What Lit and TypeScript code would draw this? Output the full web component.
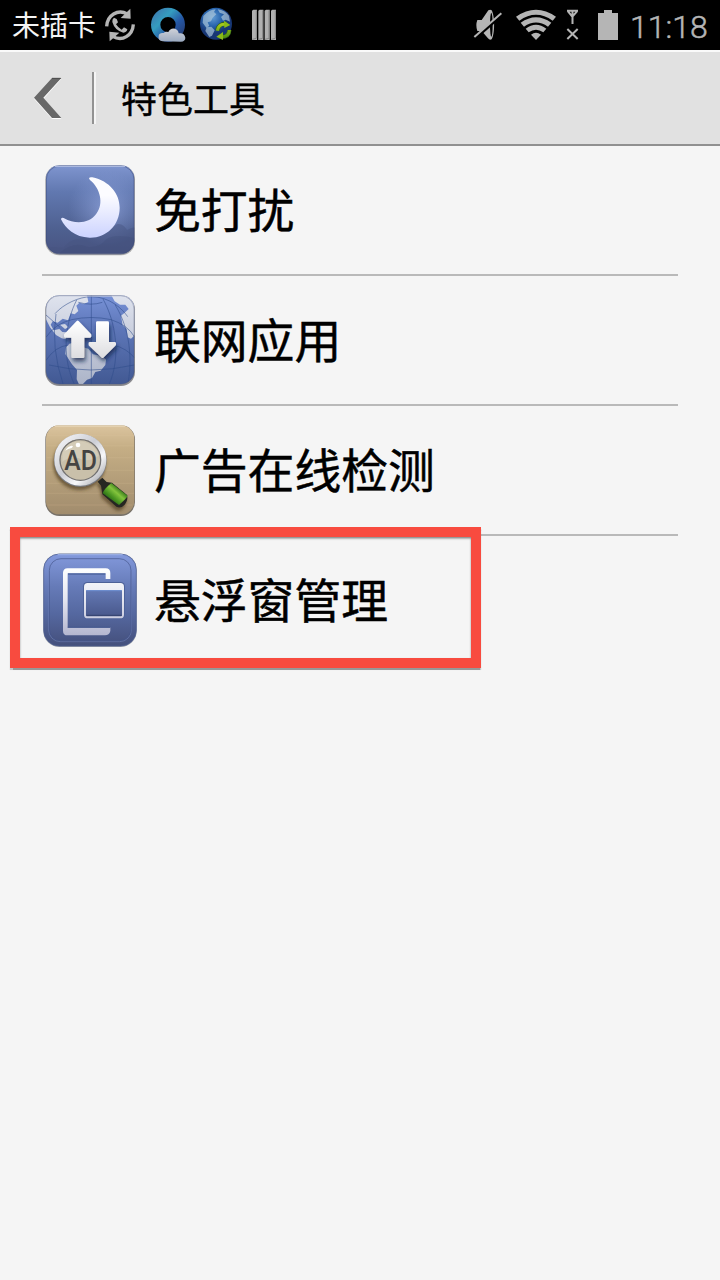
import { LitElement, html, css, svg } from "lit";
import { customElement, property } from "lit/decorators.js";

const moon = svg`
  <defs>
    <linearGradient id="sky" x1="0" y1="0" x2="0" y2="1"><stop offset="0" stop-color="#7f95cf"/><stop offset=".3" stop-color="#6178b0"/><stop offset=".72" stop-color="#4e6090"/><stop offset="1" stop-color="#495482"/></linearGradient>
    <radialGradient id="halo" cx="215" cy="160" r="115" gradientUnits="userSpaceOnUse"><stop offset="0" stop-color="#a9bcf5" stop-opacity=".55"/><stop offset="1" stop-color="#8fa4e0" stop-opacity="0"/></radialGradient>
    <linearGradient id="lune" x1="0" y1="0" x2="0" y2="1"><stop offset=".3" stop-color="#fcfcff"/><stop offset="1" stop-color="#ccd3ff"/></linearGradient>
    <clipPath id="tile"><rect x="33" y="31" width="265" height="265" rx="40"/></clipPath>
  </defs>
  <rect x="31" y="31" width="269" height="270" rx="42" fill="#aaa"/>
  <g clip-path="url(#tile)">
    <rect x="33" y="31" width="265" height="265" fill="url(#sky)"/>
    <rect x="33" y="31" width="265" height="265" fill="url(#halo)"/>
    <path d="M33 282C55 270 72 280 86 278C98 262 117 250 133 252C150 242 170 249 182 247C205 232 218 205 239 213C252 198 271 215 276 225Q292 215 300 218V300H33Z" fill="#465480" opacity=".45"/>
    <path d="M78 290Q120 258 155 275Q190 282 215 252Q240 235 300 250V300H70Z" fill="#404b77" opacity=".3"/>
  </g>
  <rect x="34" y="33" width="263" height="264" rx="40" fill="none" stroke="#3c4979" stroke-opacity=".5" stroke-width="3"/>
  <path d="M60 34H270" stroke="#b8c4e8" stroke-width="3"/>
  <path d="M162 70Q164 65 172 67C224 78 254 117 254 158C254 211 213 249 164 248C119 247 92 221 78 193Q78 186 86 189C125 211 164 202 181 180C206 152 199 108 171 80Q163 76 162 70Z" fill="url(#lune)"/>`;

const globe = svg`
  <defs>
    <linearGradient id="sea" x1="0" y1="0" x2="0" y2="1"><stop offset="0" stop-color="#7892d7"/><stop offset=".35" stop-color="#5f78ba"/><stop offset="1" stop-color="#425993"/></linearGradient>
    <linearGradient id="land" x1="0" y1="31" x2="0" y2="298" gradientUnits="userSpaceOnUse"><stop offset="0" stop-color="#dfe3ee"/><stop offset="1" stop-color="#acb4c8"/></linearGradient>
    <linearGradient id="arrow" x1="0" y1="0" x2="0" y2="1"><stop offset="0" stop-color="#fff"/><stop offset="1" stop-color="#dedee1"/></linearGradient>
    <clipPath id="tile2"><rect x="33" y="31" width="265" height="266" rx="40"/></clipPath>
    <filter id="cast" x="-.3" y="-.3" width="1.6" height="1.7"><feDropShadow dx="4" dy="10" stdDeviation="6" flood-color="#192446" flood-opacity=".75"/></filter>
  </defs>
  <rect x="31" y="31" width="269" height="272" rx="42" fill="#8c8c90"/>
  <g clip-path="url(#tile2)">
    <rect x="33" y="31" width="265" height="266" fill="url(#sea)"/>
    <g fill="url(#land)">
      <path d="M33 31H156L160 51L146 57L133 53L124 62L130 78L119 88L107 85L99 106L83 101L68 113L53 109L47 119L56 136L73 132L82 141L94 142L94 163L80 160L63 150L45 127L33 103Z"/>
      <path d="M93 187L103 176L122 172L144 187L160 191L174 208L202 213L213 224L211 240L197 257L181 261L171 279L156 284L143 298H132L125 283L126 255L111 238L91 207Z"/>
      <path d="M229 31L239 49L255 59L271 59L281 72L269 83L258 92L263 121L275 132L278 157L288 161L300 150V31Z"/>
      <path d="M75 119L90 117L100 127L90 132Z"/>
    </g>
    <g fill="none" stroke="#304c8b" stroke-opacity=".55" stroke-width="3">
      <path d="M60 86C85 57 133 35 169 35C225 35 263 73 278 95M33 157Q60 116 110 104Q169 91 228 104Q278 120 298 155M33 226Q60 185 100 180M235 180Q275 190 298 218M42 240Q165 270 298 240M63 87Q47 187 85 300M125 45C92 109 77 212 119 300M169 31V300M204 42C242 110 259 214 222 300M240 59C285 130 293 224 278 300M33 90L75 127M130 52Q169 63 202 52"/>
    </g>
  </g>
  <path d="M60 33H270" stroke="#d5dbe8" stroke-width="3"/>
  <rect x="33" y="32" width="264" height="266" rx="40" fill="none" stroke="#4b5576" stroke-opacity=".5" stroke-width="2"/>
  <g fill="url(#arrow)" stroke="url(#arrow)" stroke-width="8" stroke-linejoin="round" filter="url(#cast)">
    <path d="M128 111L165 150V154H144V215H113V154H91V150Z"/>
    <path d="M187 113H218V175H239V179L203 215L165 179V175H187Z"/>
  </g>`;

const magnifier = svg`
  <defs>
    <linearGradient id="wood" x1="0" y1="0" x2="0" y2="1"><stop offset="0" stop-color="#dbc49e"/><stop offset=".25" stop-color="#c5ae85"/><stop offset="1" stop-color="#a18c6d"/></linearGradient>
    <linearGradient id="rim" x1="0" y1="0" x2="1" y2="1"><stop offset="0" stop-color="#f8f8fa"/><stop offset=".45" stop-color="#cbcdd4"/><stop offset=".7" stop-color="#f8f8fa"/><stop offset="1" stop-color="#9d9fa4"/></linearGradient>
    <linearGradient id="grip" x1="216" y1="254" x2="251" y2="214" gradientUnits="userSpaceOnUse"><stop offset="0" stop-color="#1d5c10"/><stop offset=".35" stop-color="#4c9723"/><stop offset=".65" stop-color="#83c43c"/><stop offset="1" stop-color="#2a6d15"/></linearGradient>
    <filter id="soft" x="-.3" y="-.3" width="1.7" height="1.7"><feDropShadow dx="-3" dy="10" stdDeviation="5" flood-color="#4b391f" flood-opacity=".65"/></filter>
  </defs>
  <rect x="31" y="31" width="269" height="272" rx="42" fill="#777169"/>
  <rect x="33" y="31" width="265" height="267" rx="40" fill="url(#wood)"/>
  <path d="M35 61H295M35 92H297M35 128H297M34 166H297M34 205H297M34 235H297M38 270H292" stroke="#e4cca5" stroke-opacity=".12" stroke-width="4"/>
  <path d="M60 33H270" stroke="#eddfc4" stroke-width="3"/>
  <g filter="url(#soft)">
    <path d="M188 200L202 188L215 201L231 203L276 240Q280 256 269 269Q257 282 244 275L202 238L198 212Z" fill="#262723"/>
    <path d="M229 204L278 242Q277 247 252 270L203 235Q207 222 229 204Z" fill="url(#grip)"/>
    <circle cx="136" cy="136" r="79" fill="#777b82"/>
    <circle cx="136" cy="134" r="70" fill="#c5b99e" stroke="url(#rim)" stroke-width="16"/>
  </g>
  <circle cx="136" cy="135" r="61" fill="#c9c0aa" stroke="#737272" stroke-width="4"/>
  <path d="M82 118Q91 82 132 79Q178 81 191 122Q158 145 130 129Q97 125 82 141Z" fill="#eee8d9" opacity=".3"/>
  <text x="137" y="166" text-anchor="middle" font-family="Roboto" font-weight="500" font-size="81" textLength="98" lengthAdjust="spacingAndGlyphs" fill="#454442">AD</text>
  <circle cx="129" cy="90" r="7" fill="#fff"/><path d="M91 107Q96 95 109 92Q118 91 110 99Q99 101 91 107Z" fill="#fff"/>`;

const windows = svg`
  <defs>
    <linearGradient id="face" x1="0" y1="0" x2="0" y2="1"><stop offset="0" stop-color="#8399dc"/><stop offset=".35" stop-color="#667bb8"/><stop offset=".65" stop-color="#5568a0"/><stop offset="1" stop-color="#444f7b"/></linearGradient>
    <linearGradient id="frame" x1="0" y1="70" x2="0" y2="270" gradientUnits="userSpaceOnUse"><stop offset="0" stop-color="#fff"/><stop offset=".45" stop-color="#e6e7f1"/><stop offset="1" stop-color="#b5b7d0"/></linearGradient>
    <linearGradient id="pane" x1="0" y1="0" x2="0" y2="1"><stop offset="0" stop-color="#6479b4"/><stop offset="1" stop-color="#49588c"/></linearGradient>
  </defs>
  <rect x="25" y="26" width="280" height="280" rx="48" fill="#999da8"/>
  <rect x="26" y="27" width="278" height="276" rx="47" fill="url(#face)" stroke="#4c5d91" stroke-width="2"/>
  <path d="M68 29H263" stroke="#a1b3e8" stroke-width="3"/>
  <rect x="41" y="43" width="248" height="247" rx="35" fill="none" stroke="#8195cc" stroke-opacity=".6" stroke-width="2"/>
  <rect x="43" y="41" width="245" height="246" rx="35" fill="none" stroke="#44558c" stroke-opacity=".65" stroke-width="3"/>
  <path d="M98 70H212Q226 70 226 84V102H212V85H98V247H226V258Q223 271 210 271H98Q84 271 84 257V84Q84 70 98 70Z" fill="url(#frame)"/>
  <path d="M99 87H211M98 247H226" stroke="#3f548c" stroke-width="3"/>
  <rect x="144" y="111" width="126" height="112" rx="13" fill="#4d6198"/>
  <rect x="147" y="114" width="120" height="106" rx="11" fill="url(#frame)"/>
  <rect x="153" y="135" width="108" height="79" rx="3" fill="url(#pane)"/>
  <path d="M154 137H260" stroke="#6f90d2" stroke-width="3"/><path d="M155 211H260" stroke="#34426d" stroke-width="3"/>`;

@customElement("status-bar")
class StatusBar extends LitElement {
  static styles = css`
    :host { display: flex; align-items: center; height: 50px; background: #000; color: #f4f4f4; padding: 0 11px 0 12px; box-sizing: border-box; overflow: hidden; }
    svg { display: block; flex: none; }
    .carrier { font: 28px/48px "Noto Sans CJK SC", sans-serif; height: 50px; width: 90px; white-space: nowrap; }
    .right { margin-left: auto; display: flex; align-items: center; }
    .time { font: 300 32px/50px Roboto, sans-serif; width: 79px; color: #b5b5b5; padding-top: 3px; white-space: nowrap; -webkit-text-stroke: .5px #b5b5b5; }
  `;
  render() {
    return html`
      <span class="carrier">未插卡</span>
      <svg width="38" height="50" viewBox="306 0 114 150">
        <g fill="none" stroke="#b5b5b5" stroke-width="10"><path d="M320 79C322 46 353 26 382 42"/><path d="M400 73C398 106 367 126 338 109"/></g>
        <path d="M391 26L392 56L362 54ZM328 95L358 98L329 124Z" fill="#b5b5b5"/>
        <path d="M342 53L350 57L354 67L348 73Q355 84 365 89L372 82L382 88Q381 97 370 98Q344 91 337 66Q336 57 342 53Z" fill="#b5b5b5"/>
      </svg>
      <svg width="150" height="50" viewBox="0 0 450 150">
        <defs>
          <linearGradient id="q" x1="0" y1="0" x2="1" y2="1"><stop offset="0" stop-color="#3b7fb2"/><stop offset=".3" stop-color="#359dc0"/><stop offset=".65" stop-color="#2557a5"/><stop offset="1" stop-color="#263f77"/></linearGradient>
          <linearGradient id="cl" x1="0" y1="0" x2="0" y2="1"><stop offset="0" stop-color="#d0d2d8"/><stop offset="1" stop-color="#9aa9c0"/></linearGradient>
          <radialGradient id="ball" cx=".4" cy=".3"><stop offset="0" stop-color="#629bd3"/><stop offset=".55" stop-color="#2864ad"/><stop offset="1" stop-color="#173674"/></radialGradient>
          <linearGradient id="gr" x1="0" y1="0" x2="0" y2="1"><stop stop-color="#a4c91d"/><stop offset="1" stop-color="#579512"/></linearGradient>
        </defs>
        <circle cx="84" cy="74" r="37" fill="none" stroke="url(#q)" stroke-width="28"/>
        <path d="M68 124Q53 122 56 107Q58 97 71 99Q76 93 85 96Q91 83 105 86Q115 89 116 100Q133 97 136 113Q136 124 123 125Z" fill="url(#cl)"/>
        <circle cx="228" cy="71" r="48" fill="url(#ball)"/>
        <path d="M190 48Q208 29 227 28L222 36L229 43L218 53L213 64L203 67L208 78L199 83L188 68ZM233 28Q255 31 267 47L270 65L257 59L249 62L243 51L252 43L239 38ZM200 82L214 80L224 91L216 107L208 111L196 93Z" fill="#a9c4da" opacity=".7"/>
        <g fill="none" stroke="#316119" stroke-width="13"><path d="M232 92Q236 70 260 72M268 90Q267 111 243 111"/></g>
        <g fill="none" stroke="url(#gr)" stroke-width="9"><path d="M232 92Q236 70 258 73M268 90Q267 111 245 110"/></g>
        <path d="M252 62L271 75L253 84ZM249 96L229 110L249 120Z" fill="#8cbb18"/>
        <g fill="#b0b0b0"><path d="M336 32L340 29H351V120H336ZM355 32L359 29H370V120H355ZM374 32L378 29H389V120H374ZM393 32L397 29H408V120H393Z"/></g>
        <path d="M349 31V115L337 118M368 31V115L356 118M387 31V115L375 118M406 31V115L394 118" fill="none" stroke="#858585" stroke-width="3"/>
      </svg>
      <div class="right">
        <svg width="130" height="50" viewBox="0 0 390 150" fill="#b5b5b5">
          <path d="M52 60H65L85 31Q91 27 95 31C105 48 105 104 95 118Q89 122 84 115L65 93H52Q46 76 52 60Z"/>
          <ellipse cx="94" cy="74" rx="4" ry="36" fill="#000"/>
          <path d="M45 115L127 43" stroke="#000" stroke-width="10"/><path d="M43 111L124 40" stroke="#b5b5b5" stroke-width="6"/>
          <path d="M168 50Q228 8 288 50L278 62Q228 27 178 62Z"/>
          <path d="M182 68Q228 35 274 68L264 80Q228 55 192 80Z"/>
          <path d="M197 86Q228 63 259 86L250 97Q228 82 206 97Z"/>
          <path d="M213 104Q228 93 243 104L228 120Z"/>
          <path d="M321 32H354M324 34L337 50L351 34M337.5 32V72" stroke="#b5b5b5" stroke-width="6" fill="none"/>
          <path d="M322 87L353 117M353 87L322 117" stroke="#b5b5b5" stroke-width="6"/>
        </svg>
        <svg width="40" height="50" viewBox="30 0 120 150"><path d="M54 39H72V30H96V39H114V120H54Z" fill="#b5b5b5"/></svg>
        <span class="time">11:18</span>
      </div>`;
  }
}

@customElement("tool-row")
class ToolRow extends LitElement {
  @property() label = "";
  @property({ attribute: false }) icon: unknown;
  static styles = css`
    :host { display: flex; align-items: center; height: 128px; padding-left: 35px; }
    svg { display: block; flex: none; width: 110px; height: 110px; }
    .label { font: 46.8px/66px "Noto Sans CJK SC", sans-serif; color: #000; margin-left: 9px; padding-bottom: 4px; white-space: nowrap; -webkit-text-stroke: .5px #000; }
  `;
  render() {
    return html`<svg viewBox="0 0 330 330">${this.icon}</svg><span class="label">${this.label}</span>`;
  }
}

@customElement("app-root")
class AppRoot extends LitElement {
  static styles = css`
    :host { display: block; position: relative; height: 1280px; background: #f5f5f5; overflow: hidden; }
    header { display: flex; align-items: center; height: 96px; box-sizing: border-box; background: #e1e1e1; border-top: 2px solid #fafafa; border-bottom: 2px solid #909090; }
    .back { display: block; width: 92px; height: 92px; }
    .sep { width: 2px; height: 52px; background: #929292; border-right: 2px solid #f5f5f5; }
    h1 { margin: 0 0 0 25px; padding-bottom: 2px; font: 36px/52px "Noto Sans CJK SC", sans-serif; color: #000; -webkit-text-stroke: .4px #000; }
    .rule { height: 2px; margin: 0 42px; background: #b9b9b9; }
    .marker { position: absolute; left: 10px; top: 527px; width: 471px; height: 141px; box-sizing: border-box; border: 10px solid #f84b3f; box-shadow: 0 1.5px 1px rgba(0,0,0,.38), inset 0 1.5px 2px rgba(0,0,0,.45); }
  `;
  render() {
    const rows: [string, unknown][] = [["免打扰", moon], ["联网应用", globe], ["广告在线检测", magnifier], ["悬浮窗管理", windows]];
    return html`
      <status-bar></status-bar>
      <header>
        <svg class="back" viewBox="0 36 276 276"><path d="M102 176L156 117H184L131 176L184 237H156Z" fill="#fff"/><path d="M102 173L156 114H184L130 173L184 234H156Z" fill="#686868"/><path d="M156 115H182" stroke="#4c4c4c" stroke-width="3"/></svg>
        <span class="sep"></span>
        <h1>特色工具</h1>
      </header>
      <main>
        ${rows.map(([label, icon], i) => html`${i ? html`<div class="rule"></div>` : ""}<tool-row .label=${label} .icon=${icon}></tool-row>`)}
      </main>
      <div class="marker"></div>`;
  }
}
